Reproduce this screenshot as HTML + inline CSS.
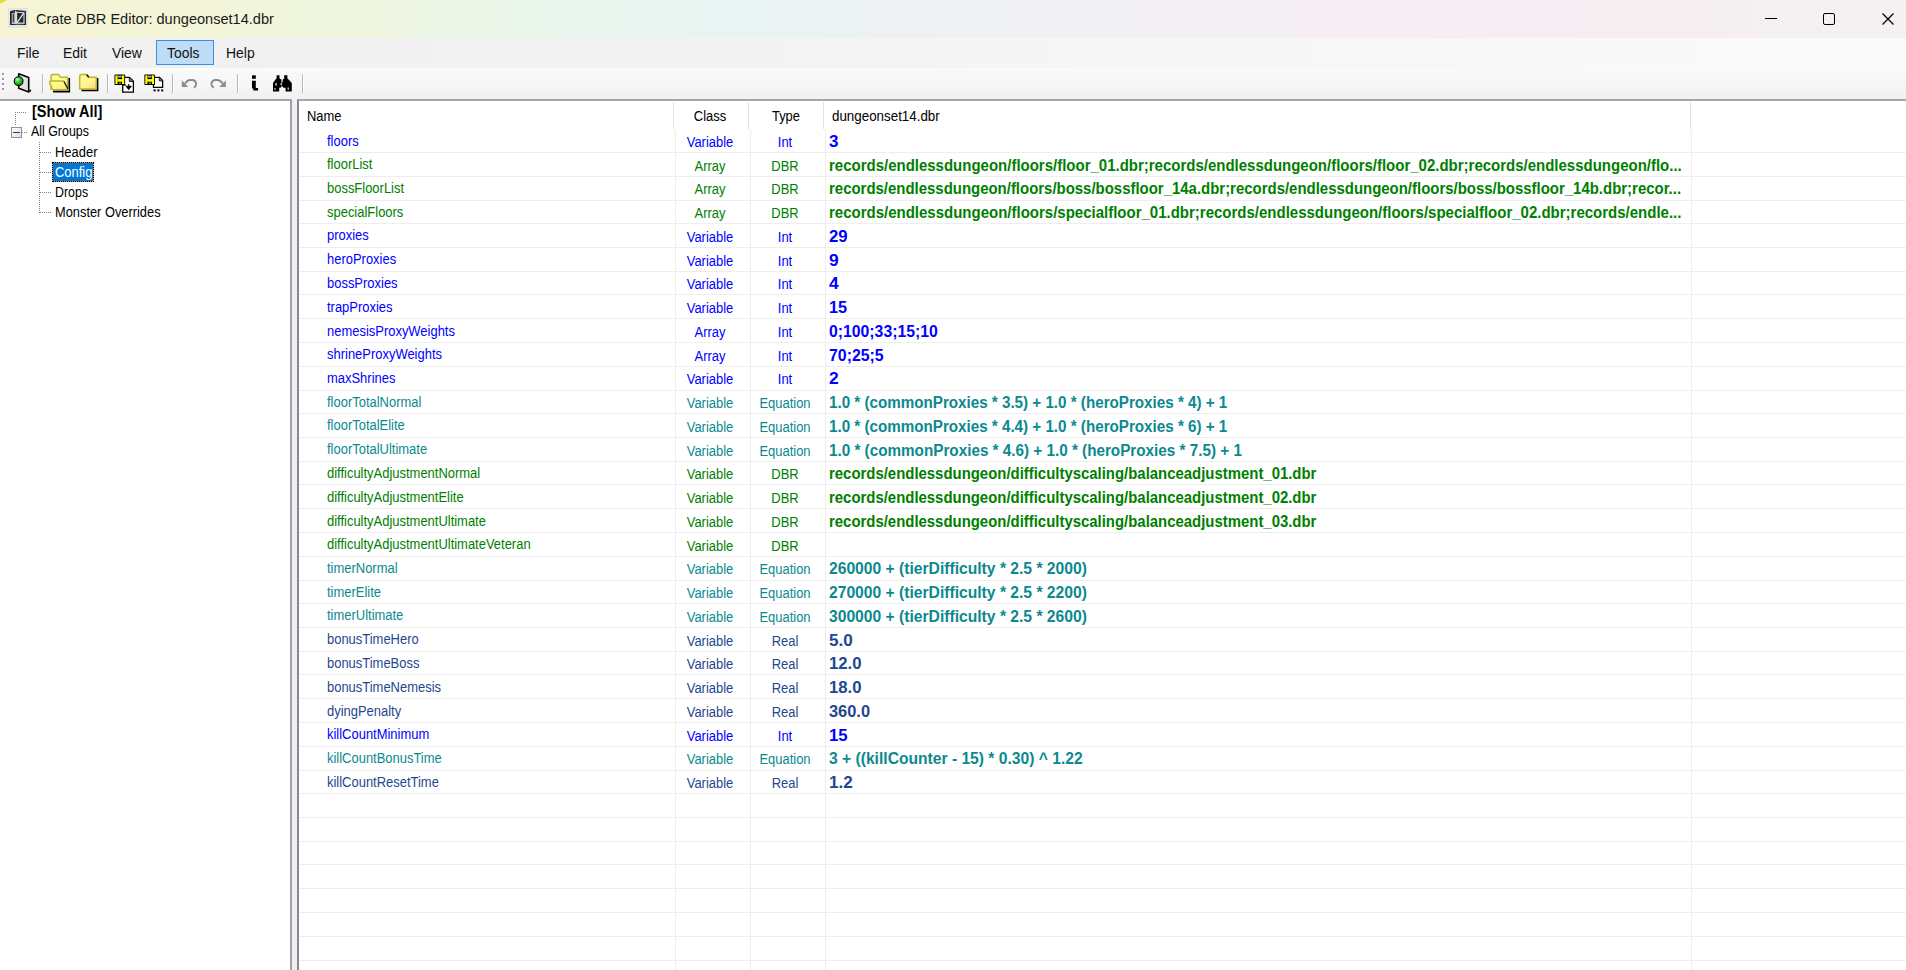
<!DOCTYPE html><html><head><meta charset="utf-8"><style>
html,body{margin:0;padding:0}
body{width:1906px;height:970px;overflow:hidden;position:relative;background:#f0f0f0;font-family:"Liberation Sans",sans-serif}
.t{position:absolute;white-space:nowrap;transform-origin:0 0}
.r{position:absolute}
svg{position:absolute;overflow:visible}
</style></head><body>
<div class="r" style="left:0px;top:0px;width:1906px;height:38px;background:linear-gradient(90deg,#f6f5d3 0px,#f3f5d9 200px,#edf5e2 400px,#e8f5ee 600px,#e8f4f2 720px,#eef1f4 900px,#f1f0f5 1100px,#f5eef3 1350px,#f5f0f2 1906px)"></div><svg style="left:0;top:0" width="10" height="6" viewBox="0 0 10 6"><path d="M0 0 L7 0 Q4 2.5 0 3.2 Z" fill="#e8dc2a"/></svg><div class="r" style="left:8px;top:8px;width:20px;height:20px;background:#e6e4df"></div><svg style="left:0;top:0" width="40" height="38" viewBox="0 0 40 38">
<path d="M10 11.6 Q12 10.2 15.6 10 Q21 10.3 26 11 L26 25 L10 25 Z" fill="#20262c"/>
<path d="M15.6 10.8 L15.6 24" stroke="#e6e6e6" stroke-width="1.1"/>
<path d="M12.2 13.4 L14.3 13.1 L14.3 23 L12.2 22.6 Z" fill="none" stroke="#d8d8d8" stroke-width="0.9"/>
<path d="M16.6 12.2 Q20.5 12.1 24 12.7 L24 22.8 Q20 23.1 16.6 23.1 Z" fill="none" stroke="#e6e6e6" stroke-width="1.1"/>
<path d="M17.3 22.4 L23.6 13.2" stroke="#e6e6e6" stroke-width="1.3"/>
<path d="M11.5 23.4 Q18 24.2 24.5 23.6" stroke="#cfcfcf" stroke-width="0.9" fill="none"/>
</svg><div class="t" style="left:35.5px;top:9px;font-size:15.5px;line-height:20px;font-weight:normal;color:#1a1a1a;transform:scaleX(0.939);">Crate DBR Editor: dungeonset14.dbr</div><div class="r" style="left:1765px;top:18px;width:12px;height:1px;background:#000"></div><div class="r" style="left:1823px;top:13px;width:12px;height:12px;border:1.3px solid #000;border-radius:2px;box-sizing:border-box"></div><svg style="left:1882px;top:13px" width="12" height="12" viewBox="0 0 12 12"><path d="M0.5 0.5 L11.5 11.5 M11.5 0.5 L0.5 11.5" stroke="#000" stroke-width="1.2"/></svg><div class="r" style="left:0px;top:38px;width:1906px;height:30px;background:linear-gradient(90deg,#f0f0f0 0px,#f2f2f2 600px,#f7f7f7 1300px,#fafafa 1906px)"></div><div class="r" style="left:156px;top:40px;width:58px;height:25px;background:#bddcf5;border:1.6px solid #3a8fe4;box-sizing:border-box"></div><div class="t" style="left:17.3px;top:43px;font-size:15.5px;line-height:20px;font-weight:normal;color:#111;transform:scaleX(0.898);">File</div><div class="t" style="left:63.3px;top:43px;font-size:15.5px;line-height:20px;font-weight:normal;color:#111;transform:scaleX(0.898);">Edit</div><div class="t" style="left:111.9px;top:43px;font-size:15.5px;line-height:20px;font-weight:normal;color:#111;transform:scaleX(0.898);">View</div><div class="t" style="left:167.2px;top:43px;font-size:15.5px;line-height:20px;font-weight:normal;color:#111;transform:scaleX(0.898);">Tools</div><div class="t" style="left:226px;top:43px;font-size:15.5px;line-height:20px;font-weight:normal;color:#111;transform:scaleX(0.898);">Help</div><div class="r" style="left:0px;top:68px;width:1906px;height:31px;background:linear-gradient(180deg,#fafafa 0px,#f5f5f5 20px,#f0f0f0 31px)"></div><div class="r" style="left:2px;top:73px;width:2px;height:2px;background:#9a9a9a;box-shadow:1px 1px 0 #fff"></div><div class="r" style="left:2px;top:78px;width:2px;height:2px;background:#9a9a9a;box-shadow:1px 1px 0 #fff"></div><div class="r" style="left:2px;top:83px;width:2px;height:2px;background:#9a9a9a;box-shadow:1px 1px 0 #fff"></div><div class="r" style="left:2px;top:88px;width:2px;height:2px;background:#9a9a9a;box-shadow:1px 1px 0 #fff"></div><div class="r" style="left:42px;top:74px;width:1px;height:19px;background:#b8b8b8;box-shadow:1px 0 0 #fff"></div><div class="r" style="left:107px;top:74px;width:1px;height:19px;background:#b8b8b8;box-shadow:1px 0 0 #fff"></div><div class="r" style="left:172px;top:74px;width:1px;height:19px;background:#b8b8b8;box-shadow:1px 0 0 #fff"></div><div class="r" style="left:237px;top:74px;width:1px;height:19px;background:#b8b8b8;box-shadow:1px 0 0 #fff"></div><div class="r" style="left:302px;top:74px;width:1px;height:19px;background:#b8b8b8;box-shadow:1px 0 0 #fff"></div><svg style="left:0;top:0" width="320" height="100" viewBox="0 0 320 100">
<defs>
<radialGradient id="gb" cx="0.35" cy="0.3" r="0.7"><stop offset="0" stop-color="#b8ffb0"/><stop offset="0.45" stop-color="#35d035"/><stop offset="1" stop-color="#0a8a0a"/></radialGradient>
<linearGradient id="fy" x1="0" y1="0" x2="1" y2="1"><stop offset="0" stop-color="#ffff9a"/><stop offset="0.6" stop-color="#fff38c"/><stop offset="1" stop-color="#f8c890"/></linearGradient>
</defs>
<!-- door -->
<path d="M30 89 L31.5 91 L29 92.5 Z" fill="#000"/>
<path d="M18.7 73.8 L28.7 77.6 L28.7 92 L18.7 88.2 Z" fill="#e2e2e2" stroke="#000" stroke-width="1.6" stroke-linejoin="round"/>
<circle cx="18.6" cy="81.2" r="4.4" fill="url(#gb)" stroke="#000" stroke-width="1.1"/>
<!-- open folder -->
<path d="M69.2 78 L69.2 91.5 L53 91.5" stroke="#000" stroke-width="1.8" fill="none"/>
<path d="M51 89 L51 76.5 Q51 74.6 53 74.6 L58.5 74.6 L60.5 77.3 L67.6 77.3 L67.6 89 Z" fill="#ffff96" stroke="#b9b72e" stroke-width="1.5"/>
<path d="M49.6 82.4 Q49.6 81 51 81 L63.8 81 L68.2 89.8 L52.6 89.8 Z" fill="url(#fy)" stroke="#b9b72e" stroke-width="1.5" stroke-linejoin="round"/>
<path d="M64 81.5 L68 89" stroke="#222" stroke-width="1.3"/>
<!-- closed folder -->
<path d="M97.5 78 L97.5 90.3 L81.5 90.3" stroke="#000" stroke-width="1.8" fill="none"/>
<path d="M79.7 88.9 L79.7 76.8 Q79.7 74.6 81.7 74.6 L86.6 74.6 L88.6 77.3 L96.3 77.3 L96.3 88.9 Z" fill="url(#fy)" stroke="#b9b72e" stroke-width="1.5"/>
<path d="M86.8 74.8 L88.8 77.3" stroke="#111" stroke-width="1.4"/>
<!-- save 1 -->
<path d="M122.7 77.4 L129.5 77.4 L133.4 81.3 L133.4 92.2 L122.7 92.2 Z" fill="#fff" stroke="#000" stroke-width="1.3"/>
<path d="M129.3 77.6 L129.3 81.5 L133.2 81.5" fill="#777" stroke="#222" stroke-width="1"/>
<path d="M126.1 86.2 L131.3 86.2 L128.7 89.6 Z M128.7 84 L128.7 87" fill="#000" stroke="#000" stroke-width="1"/>
<rect x="114.5" y="74.4" width="10.6" height="10.6" rx="0.8" fill="#000"/>
<rect x="115.4" y="75.4" width="2.2" height="8.6" fill="#ffff00"/>
<rect x="122" y="75.4" width="2.2" height="8.6" fill="#ffff00"/>
<rect x="117.4" y="79.1" width="4.8" height="2.6" fill="#ffff00"/>
<rect x="118" y="75.7" width="3.6" height="1.8" fill="#b8b8b8"/>
<rect x="119.2" y="82.4" width="1.6" height="1.6" fill="#999"/>
<path d="M122 85 L126 85" stroke="#000" stroke-width="1.2"/>
<!-- save 2 -->
<path d="M153.5 77.4 L159.5 77.4 L162.6 80.5 L162.6 87.4 L153.5 87.4 Z" fill="#fff" stroke="#000" stroke-width="1.3"/>
<path d="M159.3 77.6 L159.3 80.9 L162.4 80.9" fill="#777" stroke="#222" stroke-width="1"/>
<rect x="144.4" y="74.4" width="10.6" height="10.6" rx="0.8" fill="#000"/>
<rect x="145.3" y="75.4" width="2.2" height="8.6" fill="#ffff00"/>
<rect x="151.9" y="75.4" width="2.2" height="8.6" fill="#ffff00"/>
<rect x="147.3" y="79.1" width="4.8" height="2.6" fill="#ffff00"/>
<rect x="147.9" y="75.7" width="3.6" height="1.8" fill="#b8b8b8"/>
<rect x="149.1" y="82.4" width="1.6" height="1.6" fill="#999"/>
<rect x="153.6" y="89.4" width="2" height="2" fill="#000"/><rect x="157.4" y="89.4" width="2" height="2" fill="#000"/><rect x="161.2" y="89.4" width="2" height="2" fill="#000"/>
<!-- undo -->
<path d="M181.8 80.3 L181.8 86.9 L188.2 86.9 Z" fill="#8c8c8c"/>
<path d="M185 83.6 Q187 80.3 189.8 80 L192.5 80 Q196 80.5 196.2 84 Q196 86.5 193.8 87.6" fill="none" stroke="#8c8c8c" stroke-width="1.9"/>
<!-- redo -->
<path d="M225.8 80.3 L225.8 86.9 L219.4 86.9 Z" fill="#8c8c8c"/>
<path d="M222.6 83.6 Q220.6 80.3 217.8 80 L215.1 80 Q211.6 80.5 211.4 84 Q211.6 86.5 213.8 87.6" fill="none" stroke="#8c8c8c" stroke-width="1.9"/>
<!-- info -->
<rect x="252" y="75.3" width="3.8" height="3.5" fill="#000"/>
<path d="M252 80.8 L255.8 80.8 L255.8 87.9 L258.1 87.9 L258.1 90.6 L253.3 90.6 L253.3 88.6 L252 88.6 Z" fill="#000"/>
<!-- binoculars -->
<path d="M276.6 75.2 L279.5 75.2 L279.5 78.4 L281.4 79.5 L281.4 82.6 L282.7 82.6 L282.7 79.5 L284.2 78.4 L284.2 75.2 L287.4 75.2 L287.4 78.4 L288.8 79.8 L291.8 83 L291.8 91.6 L285.6 91.6 L285.6 87.8 L283.2 87.8 L282.8 86.5 L281 86.5 L280.8 87.8 L279.2 87.8 L279.2 91.6 L273 91.6 L273 83 L275.2 79.8 L276.6 78.4 Z" fill="#000"/>
<rect x="275.4" y="83" width="1.3" height="2.6" fill="#ddd"/><rect x="280.6" y="83" width="1.3" height="2.3" fill="#ddd"/><rect x="287.6" y="87.5" width="1.2" height="2.2" fill="#ddd"/><rect x="274.4" y="88" width="1.2" height="1.8" fill="#ccc"/>
</svg><div class="r" style="left:0px;top:99px;width:292px;height:871px;background:#fff;border-top:2px solid #a2a6ad;border-right:2px solid #9da1a8;box-sizing:border-box"></div><div class="r" style="left:297px;top:99px;width:1609px;height:871px;background:#fff;border-top:2px solid #a2a6ad;border-left:2px solid #868a92;box-sizing:border-box"></div><div class="t" style="left:31.5px;top:102px;font-size:16px;line-height:20px;font-weight:bold;color:#000;transform:scaleX(0.907)">[Show All]</div><div class="t" style="left:30.8px;top:121px;font-size:15.5px;line-height:20px;font-weight:normal;color:#000;transform:scaleX(0.8)">All Groups</div><div class="t" style="left:55px;top:142px;font-size:15.5px;line-height:20px;font-weight:normal;color:#000;transform:scaleX(0.836)">Header</div><div class="r" style="left:52px;top:162px;width:42px;height:20px;background:#0078d7;border:1px solid #f58b34;box-sizing:border-box"></div><div class="r" style="left:52px;top:162px;width:42px;height:20px;border:1px dotted #000;box-sizing:border-box"></div><div class="t" style="left:55px;top:162px;font-size:15.5px;line-height:20px;font-weight:normal;color:#fff;transform:scaleX(0.836)">Config</div><div class="t" style="left:55px;top:182px;font-size:15.5px;line-height:20px;font-weight:normal;color:#000;transform:scaleX(0.8)">Drops</div><div class="t" style="left:55px;top:202px;font-size:15.5px;line-height:20px;font-weight:normal;color:#000;transform:scaleX(0.828)">Monster Overrides</div><div class="r" style="left:15px;top:112px;width:12px;height:1px;background:repeating-linear-gradient(90deg,#808080 0 1px,transparent 1px 2px)"></div><div class="r" style="left:15px;top:112px;width:1px;height:14px;background:repeating-linear-gradient(180deg,#808080 0 1px,transparent 1px 2px)"></div><div class="r" style="left:22px;top:132px;width:5px;height:1px;background:repeating-linear-gradient(90deg,#808080 0 1px,transparent 1px 2px)"></div><div class="r" style="left:39px;top:142px;width:1px;height:71px;background:repeating-linear-gradient(180deg,#808080 0 1px,transparent 1px 2px)"></div><div class="r" style="left:40px;top:152px;width:11px;height:1px;background:repeating-linear-gradient(90deg,#808080 0 1px,transparent 1px 2px)"></div><div class="r" style="left:40px;top:172px;width:11px;height:1px;background:repeating-linear-gradient(90deg,#808080 0 1px,transparent 1px 2px)"></div><div class="r" style="left:40px;top:192px;width:11px;height:1px;background:repeating-linear-gradient(90deg,#808080 0 1px,transparent 1px 2px)"></div><div class="r" style="left:40px;top:212px;width:11px;height:1px;background:repeating-linear-gradient(90deg,#808080 0 1px,transparent 1px 2px)"></div><div class="r" style="left:11px;top:127px;width:11px;height:11px;box-sizing:border-box;border:1px solid #919191;background:linear-gradient(135deg,#fff,#e0e0e0)"></div><div class="r" style="left:13px;top:132px;width:7px;height:1px;background:#2a3a8a"></div><div class="r" style="left:673px;top:102px;width:1px;height:27px;background:#e2e2e2"></div><div class="r" style="left:748px;top:102px;width:1px;height:27px;background:#e2e2e2"></div><div class="r" style="left:823px;top:102px;width:1px;height:27px;background:#e2e2e2"></div><div class="r" style="left:1690px;top:102px;width:1px;height:27px;background:#e2e2e2"></div><div class="t" style="left:307.4px;top:106px;font-size:15.5px;line-height:20px;font-weight:normal;color:#000;transform:scaleX(0.836);">Name</div><div class="t" style="left:670.20px;width:80px;text-align:center;top:106px;font-size:15.5px;line-height:20px;font-weight:normal;color:#000;transform:scaleX(0.836);transform-origin:50% 0">Class</div><div class="t" style="left:746.20px;width:80px;text-align:center;top:106px;font-size:15.5px;line-height:20px;font-weight:normal;color:#000;transform:scaleX(0.836);transform-origin:50% 0">Type</div><div class="t" style="left:831.5px;top:106px;font-size:15.5px;line-height:20px;font-weight:normal;color:#000;transform:scaleX(0.862);">dungeonset14.dbr</div><div class="r" style="left:299px;top:152px;width:1607px;height:1px;background:#eeeeee"></div><div class="r" style="left:299px;top:176px;width:1607px;height:1px;background:#eeeeee"></div><div class="r" style="left:299px;top:200px;width:1607px;height:1px;background:#eeeeee"></div><div class="r" style="left:299px;top:223px;width:1607px;height:1px;background:#eeeeee"></div><div class="r" style="left:299px;top:247px;width:1607px;height:1px;background:#eeeeee"></div><div class="r" style="left:299px;top:271px;width:1607px;height:1px;background:#eeeeee"></div><div class="r" style="left:299px;top:294px;width:1607px;height:1px;background:#eeeeee"></div><div class="r" style="left:299px;top:318px;width:1607px;height:1px;background:#eeeeee"></div><div class="r" style="left:299px;top:342px;width:1607px;height:1px;background:#eeeeee"></div><div class="r" style="left:299px;top:366px;width:1607px;height:1px;background:#eeeeee"></div><div class="r" style="left:299px;top:390px;width:1607px;height:1px;background:#eeeeee"></div><div class="r" style="left:299px;top:413px;width:1607px;height:1px;background:#eeeeee"></div><div class="r" style="left:299px;top:437px;width:1607px;height:1px;background:#eeeeee"></div><div class="r" style="left:299px;top:461px;width:1607px;height:1px;background:#eeeeee"></div><div class="r" style="left:299px;top:484px;width:1607px;height:1px;background:#eeeeee"></div><div class="r" style="left:299px;top:508px;width:1607px;height:1px;background:#eeeeee"></div><div class="r" style="left:299px;top:532px;width:1607px;height:1px;background:#eeeeee"></div><div class="r" style="left:299px;top:556px;width:1607px;height:1px;background:#eeeeee"></div><div class="r" style="left:299px;top:580px;width:1607px;height:1px;background:#eeeeee"></div><div class="r" style="left:299px;top:603px;width:1607px;height:1px;background:#eeeeee"></div><div class="r" style="left:299px;top:627px;width:1607px;height:1px;background:#eeeeee"></div><div class="r" style="left:299px;top:651px;width:1607px;height:1px;background:#eeeeee"></div><div class="r" style="left:299px;top:674px;width:1607px;height:1px;background:#eeeeee"></div><div class="r" style="left:299px;top:698px;width:1607px;height:1px;background:#eeeeee"></div><div class="r" style="left:299px;top:722px;width:1607px;height:1px;background:#eeeeee"></div><div class="r" style="left:299px;top:746px;width:1607px;height:1px;background:#eeeeee"></div><div class="r" style="left:299px;top:770px;width:1607px;height:1px;background:#eeeeee"></div><div class="r" style="left:299px;top:793px;width:1607px;height:1px;background:#eeeeee"></div><div class="r" style="left:299px;top:817px;width:1607px;height:1px;background:#eeeeee"></div><div class="r" style="left:299px;top:841px;width:1607px;height:1px;background:#eeeeee"></div><div class="r" style="left:299px;top:864px;width:1607px;height:1px;background:#eeeeee"></div><div class="r" style="left:299px;top:888px;width:1607px;height:1px;background:#eeeeee"></div><div class="r" style="left:299px;top:912px;width:1607px;height:1px;background:#eeeeee"></div><div class="r" style="left:299px;top:936px;width:1607px;height:1px;background:#eeeeee"></div><div class="r" style="left:299px;top:960px;width:1607px;height:1px;background:#eeeeee"></div><div class="r" style="left:675px;top:129px;width:1px;height:841px;background:#eeeeee"></div><div class="r" style="left:750px;top:129px;width:1px;height:841px;background:#eeeeee"></div><div class="r" style="left:825px;top:129px;width:1px;height:841px;background:#eeeeee"></div><div class="r" style="left:1691px;top:129px;width:1px;height:841px;background:#eeeeee"></div><div class="t" style="left:327px;top:131px;font-size:15.5px;line-height:20px;font-weight:normal;color:#0000ff;transform:scaleX(0.836);">floors</div><div class="t" style="left:664.80px;width:90px;text-align:center;top:132px;font-size:15.5px;line-height:20px;font-weight:normal;color:#0000ff;transform:scaleX(0.836);transform-origin:50% 0">Variable</div><div class="t" style="left:740.20px;width:90px;text-align:center;top:132px;font-size:15.5px;line-height:20px;font-weight:normal;color:#0000ff;transform:scaleX(0.836);transform-origin:50% 0">Int</div><div class="t" style="left:829px;top:132px;font-size:16px;line-height:20px;font-weight:bold;color:#0000ff;transform:scaleX(1.0667);">3</div><div class="t" style="left:327px;top:154px;font-size:15.5px;line-height:20px;font-weight:normal;color:#008000;transform:scaleX(0.836);">floorList</div><div class="t" style="left:664.80px;width:90px;text-align:center;top:156px;font-size:15.5px;line-height:20px;font-weight:normal;color:#008000;transform:scaleX(0.836);transform-origin:50% 0">Array</div><div class="t" style="left:740.20px;width:90px;text-align:center;top:156px;font-size:15.5px;line-height:20px;font-weight:normal;color:#008000;transform:scaleX(0.836);transform-origin:50% 0">DBR</div><div class="t" style="left:829px;top:156px;font-size:16px;line-height:20px;font-weight:bold;color:#008000;transform:scaleX(0.9367);">records/endlessdungeon/floors/floor_01.dbr;records/endlessdungeon/floors/floor_02.dbr;records/endlessdungeon/flo...</div><div class="t" style="left:327px;top:178px;font-size:15.5px;line-height:20px;font-weight:normal;color:#008000;transform:scaleX(0.836);">bossFloorList</div><div class="t" style="left:664.80px;width:90px;text-align:center;top:179px;font-size:15.5px;line-height:20px;font-weight:normal;color:#008000;transform:scaleX(0.836);transform-origin:50% 0">Array</div><div class="t" style="left:740.20px;width:90px;text-align:center;top:179px;font-size:15.5px;line-height:20px;font-weight:normal;color:#008000;transform:scaleX(0.836);transform-origin:50% 0">DBR</div><div class="t" style="left:829px;top:179px;font-size:16px;line-height:20px;font-weight:bold;color:#008000;transform:scaleX(0.9341);">records/endlessdungeon/floors/boss/bossfloor_14a.dbr;records/endlessdungeon/floors/boss/bossfloor_14b.dbr;recor...</div><div class="t" style="left:327px;top:202px;font-size:15.5px;line-height:20px;font-weight:normal;color:#008000;transform:scaleX(0.836);">specialFloors</div><div class="t" style="left:664.80px;width:90px;text-align:center;top:203px;font-size:15.5px;line-height:20px;font-weight:normal;color:#008000;transform:scaleX(0.836);transform-origin:50% 0">Array</div><div class="t" style="left:740.20px;width:90px;text-align:center;top:203px;font-size:15.5px;line-height:20px;font-weight:normal;color:#008000;transform:scaleX(0.836);transform-origin:50% 0">DBR</div><div class="t" style="left:829px;top:203px;font-size:16px;line-height:20px;font-weight:bold;color:#008000;transform:scaleX(0.9372);">records/endlessdungeon/floors/specialfloor_01.dbr;records/endlessdungeon/floors/specialfloor_02.dbr;records/endle...</div><div class="t" style="left:327px;top:225px;font-size:15.5px;line-height:20px;font-weight:normal;color:#0000ff;transform:scaleX(0.836);">proxies</div><div class="t" style="left:664.80px;width:90px;text-align:center;top:227px;font-size:15.5px;line-height:20px;font-weight:normal;color:#0000ff;transform:scaleX(0.836);transform-origin:50% 0">Variable</div><div class="t" style="left:740.20px;width:90px;text-align:center;top:227px;font-size:15.5px;line-height:20px;font-weight:normal;color:#0000ff;transform:scaleX(0.836);transform-origin:50% 0">Int</div><div class="t" style="left:829px;top:227px;font-size:16px;line-height:20px;font-weight:bold;color:#0000ff;transform:scaleX(1.0444);">29</div><div class="t" style="left:327px;top:249px;font-size:15.5px;line-height:20px;font-weight:normal;color:#0000ff;transform:scaleX(0.836);">heroProxies</div><div class="t" style="left:664.80px;width:90px;text-align:center;top:251px;font-size:15.5px;line-height:20px;font-weight:normal;color:#0000ff;transform:scaleX(0.836);transform-origin:50% 0">Variable</div><div class="t" style="left:740.20px;width:90px;text-align:center;top:251px;font-size:15.5px;line-height:20px;font-weight:normal;color:#0000ff;transform:scaleX(0.836);transform-origin:50% 0">Int</div><div class="t" style="left:829px;top:251px;font-size:16px;line-height:20px;font-weight:bold;color:#0000ff;transform:scaleX(1.0889);">9</div><div class="t" style="left:327px;top:273px;font-size:15.5px;line-height:20px;font-weight:normal;color:#0000ff;transform:scaleX(0.836);">bossProxies</div><div class="t" style="left:664.80px;width:90px;text-align:center;top:274px;font-size:15.5px;line-height:20px;font-weight:normal;color:#0000ff;transform:scaleX(0.836);transform-origin:50% 0">Variable</div><div class="t" style="left:740.20px;width:90px;text-align:center;top:274px;font-size:15.5px;line-height:20px;font-weight:normal;color:#0000ff;transform:scaleX(0.836);transform-origin:50% 0">Int</div><div class="t" style="left:829px;top:274px;font-size:16px;line-height:20px;font-weight:bold;color:#0000ff;transform:scaleX(1.0889);">4</div><div class="t" style="left:327px;top:297px;font-size:15.5px;line-height:20px;font-weight:normal;color:#0000ff;transform:scaleX(0.836);">trapProxies</div><div class="t" style="left:664.80px;width:90px;text-align:center;top:298px;font-size:15.5px;line-height:20px;font-weight:normal;color:#0000ff;transform:scaleX(0.836);transform-origin:50% 0">Variable</div><div class="t" style="left:740.20px;width:90px;text-align:center;top:298px;font-size:15.5px;line-height:20px;font-weight:normal;color:#0000ff;transform:scaleX(0.836);transform-origin:50% 0">Int</div><div class="t" style="left:829px;top:298px;font-size:16px;line-height:20px;font-weight:bold;color:#0000ff;transform:scaleX(1.0167);">15</div><div class="t" style="left:327px;top:321px;font-size:15.5px;line-height:20px;font-weight:normal;color:#0000ff;transform:scaleX(0.836);">nemesisProxyWeights</div><div class="t" style="left:664.80px;width:90px;text-align:center;top:322px;font-size:15.5px;line-height:20px;font-weight:normal;color:#0000ff;transform:scaleX(0.836);transform-origin:50% 0">Array</div><div class="t" style="left:740.20px;width:90px;text-align:center;top:322px;font-size:15.5px;line-height:20px;font-weight:normal;color:#0000ff;transform:scaleX(0.836);transform-origin:50% 0">Int</div><div class="t" style="left:829px;top:322px;font-size:16px;line-height:20px;font-weight:bold;color:#0000ff;transform:scaleX(0.9864);">0;100;33;15;10</div><div class="t" style="left:327px;top:344px;font-size:15.5px;line-height:20px;font-weight:normal;color:#0000ff;transform:scaleX(0.836);">shrineProxyWeights</div><div class="t" style="left:664.80px;width:90px;text-align:center;top:346px;font-size:15.5px;line-height:20px;font-weight:normal;color:#0000ff;transform:scaleX(0.836);transform-origin:50% 0">Array</div><div class="t" style="left:740.20px;width:90px;text-align:center;top:346px;font-size:15.5px;line-height:20px;font-weight:normal;color:#0000ff;transform:scaleX(0.836);transform-origin:50% 0">Int</div><div class="t" style="left:829px;top:346px;font-size:16px;line-height:20px;font-weight:bold;color:#0000ff;transform:scaleX(0.9909);">70;25;5</div><div class="t" style="left:327px;top:368px;font-size:15.5px;line-height:20px;font-weight:normal;color:#0000ff;transform:scaleX(0.836);">maxShrines</div><div class="t" style="left:664.80px;width:90px;text-align:center;top:369px;font-size:15.5px;line-height:20px;font-weight:normal;color:#0000ff;transform:scaleX(0.836);transform-origin:50% 0">Variable</div><div class="t" style="left:740.20px;width:90px;text-align:center;top:369px;font-size:15.5px;line-height:20px;font-weight:normal;color:#0000ff;transform:scaleX(0.836);transform-origin:50% 0">Int</div><div class="t" style="left:829px;top:369px;font-size:16px;line-height:20px;font-weight:bold;color:#0000ff;transform:scaleX(1.0889);">2</div><div class="t" style="left:327px;top:392px;font-size:15.5px;line-height:20px;font-weight:normal;color:#0b898f;transform:scaleX(0.836);">floorTotalNormal</div><div class="t" style="left:664.80px;width:90px;text-align:center;top:393px;font-size:15.5px;line-height:20px;font-weight:normal;color:#0b898f;transform:scaleX(0.836);transform-origin:50% 0">Variable</div><div class="t" style="left:740.20px;width:90px;text-align:center;top:393px;font-size:15.5px;line-height:20px;font-weight:normal;color:#0b898f;transform:scaleX(0.836);transform-origin:50% 0">Equation</div><div class="t" style="left:829px;top:393px;font-size:16px;line-height:20px;font-weight:bold;color:#0b898f;transform:scaleX(0.9488);">1.0 * (commonProxies * 3.5) + 1.0 * (heroProxies * 4) + 1</div><div class="t" style="left:327px;top:415px;font-size:15.5px;line-height:20px;font-weight:normal;color:#0b898f;transform:scaleX(0.836);">floorTotalElite</div><div class="t" style="left:664.80px;width:90px;text-align:center;top:417px;font-size:15.5px;line-height:20px;font-weight:normal;color:#0b898f;transform:scaleX(0.836);transform-origin:50% 0">Variable</div><div class="t" style="left:740.20px;width:90px;text-align:center;top:417px;font-size:15.5px;line-height:20px;font-weight:normal;color:#0b898f;transform:scaleX(0.836);transform-origin:50% 0">Equation</div><div class="t" style="left:829px;top:417px;font-size:16px;line-height:20px;font-weight:bold;color:#0b898f;transform:scaleX(0.9488);">1.0 * (commonProxies * 4.4) + 1.0 * (heroProxies * 6) + 1</div><div class="t" style="left:327px;top:439px;font-size:15.5px;line-height:20px;font-weight:normal;color:#0b898f;transform:scaleX(0.836);">floorTotalUltimate</div><div class="t" style="left:664.80px;width:90px;text-align:center;top:441px;font-size:15.5px;line-height:20px;font-weight:normal;color:#0b898f;transform:scaleX(0.836);transform-origin:50% 0">Variable</div><div class="t" style="left:740.20px;width:90px;text-align:center;top:441px;font-size:15.5px;line-height:20px;font-weight:normal;color:#0b898f;transform:scaleX(0.836);transform-origin:50% 0">Equation</div><div class="t" style="left:829px;top:441px;font-size:16px;line-height:20px;font-weight:bold;color:#0b898f;transform:scaleX(0.9533);">1.0 * (commonProxies * 4.6) + 1.0 * (heroProxies * 7.5) + 1</div><div class="t" style="left:327px;top:463px;font-size:15.5px;line-height:20px;font-weight:normal;color:#008000;transform:scaleX(0.836);">difficultyAdjustmentNormal</div><div class="t" style="left:664.80px;width:90px;text-align:center;top:464px;font-size:15.5px;line-height:20px;font-weight:normal;color:#008000;transform:scaleX(0.836);transform-origin:50% 0">Variable</div><div class="t" style="left:740.20px;width:90px;text-align:center;top:464px;font-size:15.5px;line-height:20px;font-weight:normal;color:#008000;transform:scaleX(0.836);transform-origin:50% 0">DBR</div><div class="t" style="left:829px;top:464px;font-size:16px;line-height:20px;font-weight:bold;color:#008000;transform:scaleX(0.9323);">records/endlessdungeon/difficultyscaling/balanceadjustment_01.dbr</div><div class="t" style="left:327px;top:487px;font-size:15.5px;line-height:20px;font-weight:normal;color:#008000;transform:scaleX(0.836);">difficultyAdjustmentElite</div><div class="t" style="left:664.80px;width:90px;text-align:center;top:488px;font-size:15.5px;line-height:20px;font-weight:normal;color:#008000;transform:scaleX(0.836);transform-origin:50% 0">Variable</div><div class="t" style="left:740.20px;width:90px;text-align:center;top:488px;font-size:15.5px;line-height:20px;font-weight:normal;color:#008000;transform:scaleX(0.836);transform-origin:50% 0">DBR</div><div class="t" style="left:829px;top:488px;font-size:16px;line-height:20px;font-weight:bold;color:#008000;transform:scaleX(0.9323);">records/endlessdungeon/difficultyscaling/balanceadjustment_02.dbr</div><div class="t" style="left:327px;top:511px;font-size:15.5px;line-height:20px;font-weight:normal;color:#008000;transform:scaleX(0.836);">difficultyAdjustmentUltimate</div><div class="t" style="left:664.80px;width:90px;text-align:center;top:512px;font-size:15.5px;line-height:20px;font-weight:normal;color:#008000;transform:scaleX(0.836);transform-origin:50% 0">Variable</div><div class="t" style="left:740.20px;width:90px;text-align:center;top:512px;font-size:15.5px;line-height:20px;font-weight:normal;color:#008000;transform:scaleX(0.836);transform-origin:50% 0">DBR</div><div class="t" style="left:829px;top:512px;font-size:16px;line-height:20px;font-weight:bold;color:#008000;transform:scaleX(0.9323);">records/endlessdungeon/difficultyscaling/balanceadjustment_03.dbr</div><div class="t" style="left:327px;top:534px;font-size:15.5px;line-height:20px;font-weight:normal;color:#008000;transform:scaleX(0.836);">difficultyAdjustmentUltimateVeteran</div><div class="t" style="left:664.80px;width:90px;text-align:center;top:536px;font-size:15.5px;line-height:20px;font-weight:normal;color:#008000;transform:scaleX(0.836);transform-origin:50% 0">Variable</div><div class="t" style="left:740.20px;width:90px;text-align:center;top:536px;font-size:15.5px;line-height:20px;font-weight:normal;color:#008000;transform:scaleX(0.836);transform-origin:50% 0">DBR</div><div class="t" style="left:327px;top:558px;font-size:15.5px;line-height:20px;font-weight:normal;color:#0b898f;transform:scaleX(0.836);">timerNormal</div><div class="t" style="left:664.80px;width:90px;text-align:center;top:559px;font-size:15.5px;line-height:20px;font-weight:normal;color:#0b898f;transform:scaleX(0.836);transform-origin:50% 0">Variable</div><div class="t" style="left:740.20px;width:90px;text-align:center;top:559px;font-size:15.5px;line-height:20px;font-weight:normal;color:#0b898f;transform:scaleX(0.836);transform-origin:50% 0">Equation</div><div class="t" style="left:829px;top:559px;font-size:16px;line-height:20px;font-weight:bold;color:#0b898f;transform:scaleX(0.9779);">260000 + (tierDifficulty * 2.5 * 2000)</div><div class="t" style="left:327px;top:582px;font-size:15.5px;line-height:20px;font-weight:normal;color:#0b898f;transform:scaleX(0.836);">timerElite</div><div class="t" style="left:664.80px;width:90px;text-align:center;top:583px;font-size:15.5px;line-height:20px;font-weight:normal;color:#0b898f;transform:scaleX(0.836);transform-origin:50% 0">Variable</div><div class="t" style="left:740.20px;width:90px;text-align:center;top:583px;font-size:15.5px;line-height:20px;font-weight:normal;color:#0b898f;transform:scaleX(0.836);transform-origin:50% 0">Equation</div><div class="t" style="left:829px;top:583px;font-size:16px;line-height:20px;font-weight:bold;color:#0b898f;transform:scaleX(0.9779);">270000 + (tierDifficulty * 2.5 * 2200)</div><div class="t" style="left:327px;top:605px;font-size:15.5px;line-height:20px;font-weight:normal;color:#0b898f;transform:scaleX(0.836);">timerUltimate</div><div class="t" style="left:664.80px;width:90px;text-align:center;top:607px;font-size:15.5px;line-height:20px;font-weight:normal;color:#0b898f;transform:scaleX(0.836);transform-origin:50% 0">Variable</div><div class="t" style="left:740.20px;width:90px;text-align:center;top:607px;font-size:15.5px;line-height:20px;font-weight:normal;color:#0b898f;transform:scaleX(0.836);transform-origin:50% 0">Equation</div><div class="t" style="left:829px;top:607px;font-size:16px;line-height:20px;font-weight:bold;color:#0b898f;transform:scaleX(0.9779);">300000 + (tierDifficulty * 2.5 * 2600)</div><div class="t" style="left:327px;top:629px;font-size:15.5px;line-height:20px;font-weight:normal;color:#1f4790;transform:scaleX(0.836);">bonusTimeHero</div><div class="t" style="left:664.80px;width:90px;text-align:center;top:631px;font-size:15.5px;line-height:20px;font-weight:normal;color:#1f4790;transform:scaleX(0.836);transform-origin:50% 0">Variable</div><div class="t" style="left:740.20px;width:90px;text-align:center;top:631px;font-size:15.5px;line-height:20px;font-weight:normal;color:#1f4790;transform:scaleX(0.836);transform-origin:50% 0">Real</div><div class="t" style="left:829px;top:631px;font-size:16px;line-height:20px;font-weight:bold;color:#1f4790;transform:scaleX(1.0682);">5.0</div><div class="t" style="left:327px;top:653px;font-size:15.5px;line-height:20px;font-weight:normal;color:#1f4790;transform:scaleX(0.836);">bonusTimeBoss</div><div class="t" style="left:664.80px;width:90px;text-align:center;top:654px;font-size:15.5px;line-height:20px;font-weight:normal;color:#1f4790;transform:scaleX(0.836);transform-origin:50% 0">Variable</div><div class="t" style="left:740.20px;width:90px;text-align:center;top:654px;font-size:15.5px;line-height:20px;font-weight:normal;color:#1f4790;transform:scaleX(0.836);transform-origin:50% 0">Real</div><div class="t" style="left:829px;top:654px;font-size:16px;line-height:20px;font-weight:bold;color:#1f4790;transform:scaleX(1.0452);">12.0</div><div class="t" style="left:327px;top:677px;font-size:15.5px;line-height:20px;font-weight:normal;color:#1f4790;transform:scaleX(0.836);">bonusTimeNemesis</div><div class="t" style="left:664.80px;width:90px;text-align:center;top:678px;font-size:15.5px;line-height:20px;font-weight:normal;color:#1f4790;transform:scaleX(0.836);transform-origin:50% 0">Variable</div><div class="t" style="left:740.20px;width:90px;text-align:center;top:678px;font-size:15.5px;line-height:20px;font-weight:normal;color:#1f4790;transform:scaleX(0.836);transform-origin:50% 0">Real</div><div class="t" style="left:829px;top:678px;font-size:16px;line-height:20px;font-weight:bold;color:#1f4790;transform:scaleX(1.0452);">18.0</div><div class="t" style="left:327px;top:701px;font-size:15.5px;line-height:20px;font-weight:normal;color:#1f4790;transform:scaleX(0.836);">dyingPenalty</div><div class="t" style="left:664.80px;width:90px;text-align:center;top:702px;font-size:15.5px;line-height:20px;font-weight:normal;color:#1f4790;transform:scaleX(0.836);transform-origin:50% 0">Variable</div><div class="t" style="left:740.20px;width:90px;text-align:center;top:702px;font-size:15.5px;line-height:20px;font-weight:normal;color:#1f4790;transform:scaleX(0.836);transform-origin:50% 0">Real</div><div class="t" style="left:829px;top:702px;font-size:16px;line-height:20px;font-weight:bold;color:#1f4790;transform:scaleX(1.025);">360.0</div><div class="t" style="left:327px;top:724px;font-size:15.5px;line-height:20px;font-weight:normal;color:#0000ff;transform:scaleX(0.836);">killCountMinimum</div><div class="t" style="left:664.80px;width:90px;text-align:center;top:726px;font-size:15.5px;line-height:20px;font-weight:normal;color:#0000ff;transform:scaleX(0.836);transform-origin:50% 0">Variable</div><div class="t" style="left:740.20px;width:90px;text-align:center;top:726px;font-size:15.5px;line-height:20px;font-weight:normal;color:#0000ff;transform:scaleX(0.836);transform-origin:50% 0">Int</div><div class="t" style="left:829px;top:726px;font-size:16px;line-height:20px;font-weight:bold;color:#0000ff;transform:scaleX(1.0444);">15</div><div class="t" style="left:327px;top:748px;font-size:15.5px;line-height:20px;font-weight:normal;color:#0b898f;transform:scaleX(0.836);">killCountBonusTime</div><div class="t" style="left:664.80px;width:90px;text-align:center;top:749px;font-size:15.5px;line-height:20px;font-weight:normal;color:#0b898f;transform:scaleX(0.836);transform-origin:50% 0">Variable</div><div class="t" style="left:740.20px;width:90px;text-align:center;top:749px;font-size:15.5px;line-height:20px;font-weight:normal;color:#0b898f;transform:scaleX(0.836);transform-origin:50% 0">Equation</div><div class="t" style="left:829px;top:749px;font-size:16px;line-height:20px;font-weight:bold;color:#0b898f;transform:scaleX(0.9768);">3 + ((killCounter - 15) * 0.30) ^ 1.22</div><div class="t" style="left:327px;top:772px;font-size:15.5px;line-height:20px;font-weight:normal;color:#1f4790;transform:scaleX(0.836);">killCountResetTime</div><div class="t" style="left:664.80px;width:90px;text-align:center;top:773px;font-size:15.5px;line-height:20px;font-weight:normal;color:#1f4790;transform:scaleX(0.836);transform-origin:50% 0">Variable</div><div class="t" style="left:740.20px;width:90px;text-align:center;top:773px;font-size:15.5px;line-height:20px;font-weight:normal;color:#1f4790;transform:scaleX(0.836);transform-origin:50% 0">Real</div><div class="t" style="left:829px;top:773px;font-size:16px;line-height:20px;font-weight:bold;color:#1f4790;transform:scaleX(1.0682);">1.2</div></body></html>
